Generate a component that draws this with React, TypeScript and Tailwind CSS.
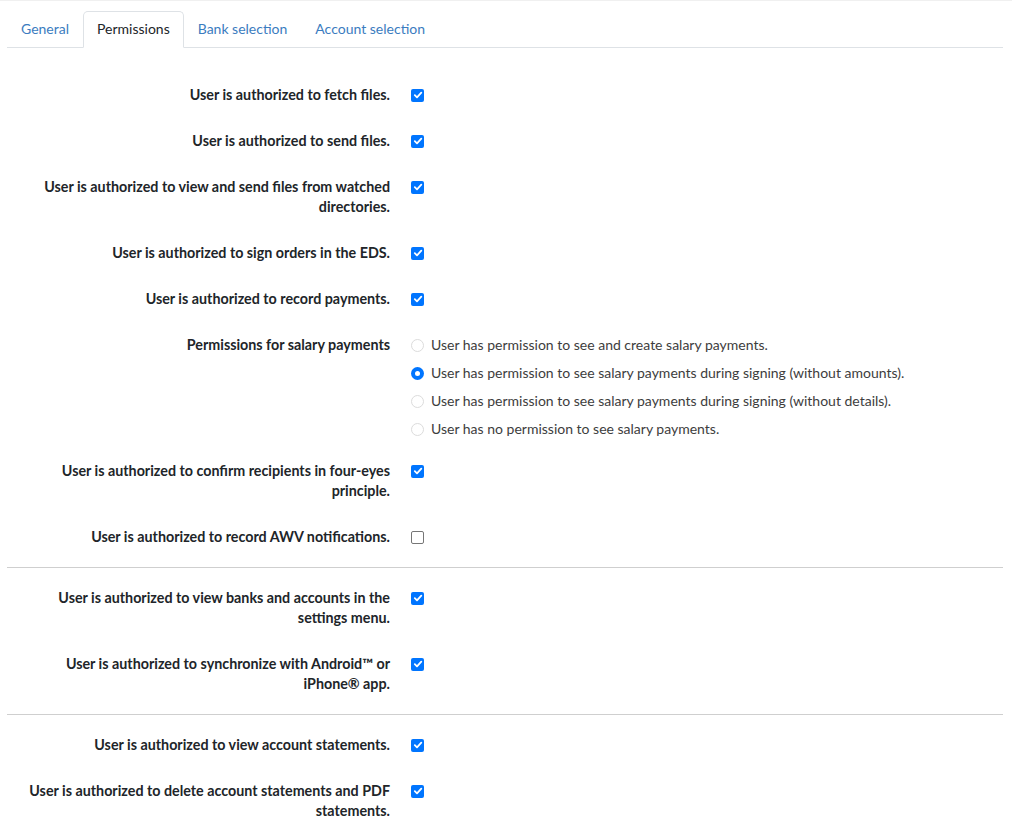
import { Fragment } from 'react';

type Row =
  | { kind: 'check'; lines: string[]; checked: boolean }
  | { kind: 'radio'; lines: string[]; options: string[]; selected: number };

const sections: Row[][] = [
  [
    { kind: 'check', lines: ['User is authorized to fetch files.'], checked: true },
    { kind: 'check', lines: ['User is authorized to send files.'], checked: true },
    { kind: 'check', lines: ['User is authorized to view and send files from watched', 'directories.'], checked: true },
    { kind: 'check', lines: ['User is authorized to sign orders in the EDS.'], checked: true },
    { kind: 'check', lines: ['User is authorized to record payments.'], checked: true },
    {
      kind: 'radio',
      lines: ['Permissions for salary payments'],
      options: [
        'User has permission to see and create salary payments.',
        'User has permission to see salary payments during signing (without amounts).',
        'User has permission to see salary payments during signing (without details).',
        'User has no permission to see salary payments.',
      ],
      selected: 1,
    },
    { kind: 'check', lines: ['User is authorized to confirm recipients in four-eyes', 'principle.'], checked: true },
    { kind: 'check', lines: ['User is authorized to record AWV notifications.'], checked: false },
  ],
  [
    { kind: 'check', lines: ['User is authorized to view banks and accounts in the', 'settings menu.'], checked: true },
    { kind: 'check', lines: ['User is authorized to synchronize with Android\u2122 or', 'iPhone\u00ae app.'], checked: true },
  ],
  [
    { kind: 'check', lines: ['User is authorized to view account statements.'], checked: true },
    { kind: 'check', lines: ['User is authorized to delete account statements and PDF', 'statements.'], checked: true },
  ],
];

const tabs = ['General', 'Permissions', 'Bank selection', 'Account selection'];

function Checkbox({ checked }: { checked: boolean }) {
  if (!checked) {
    return <span className="block w-[13px] h-[13px] rounded-[2px] border border-[#767676] bg-white" />;
  }
  return (
    <span className="flex items-center justify-center w-[13px] h-[13px] rounded-[2px] bg-[#0075ff]">
      <svg width="10" height="10" viewBox="0 0 10 10" fill="none">
        <path d="M1.8 5.2 L4 7.3 L8.3 2.6" stroke="white" strokeWidth="1.8" strokeLinecap="round" strokeLinejoin="round" />
      </svg>
    </span>
  );
}

function Radio({ checked }: { checked: boolean }) {
  if (checked) {
    return (
      <span className="flex items-center justify-center w-[13px] h-[13px] rounded-full bg-[#0075ff]">
        <span className="block w-[5px] h-[5px] rounded-full bg-white" />
      </span>
    );
  }
  return <span className="block w-[13px] h-[13px] rounded-full border border-[#dcdcdc] bg-white" />;
}

export default function App() {
  return (
    <div
      className="min-h-screen bg-white border-t border-[#f0f0f0] pl-[7px] pr-[9px] text-[14px] leading-5 text-[#212529]"
      style={{ fontFamily: 'Lato, "Noto Sans", sans-serif' }}
    >
      <div className="flex pt-[10px] border-b border-[#dee2e6]">
        {tabs.map((t, i) => (
          <div
            key={t}
            className={
              i === 1
                ? 'px-[13px] py-[7px] -mb-px border border-[#dee2e6] border-b-white rounded-t-[5px] bg-white text-[#212529]'
                : 'px-[13px] py-[7px] border border-transparent text-[#3b7cc0]'
            }
          >
            {t}
          </div>
        ))}
      </div>

      <div className="pt-[37px]">
        {sections.map((rows, si) => (
          <Fragment key={si}>
            {si > 0 && <hr className="my-5 border-[#cfcfcf]" />}
            <div className="flex flex-col gap-[26px]">
              {rows.map((row, ri) => (
                <div key={ri} className={`flex ${row.kind === 'radio' ? '-mb-[4px]' : ''}`}>
                  <div className="w-[383px] shrink-0 text-right font-bold text-[14.3px]">
                    {row.lines.map((l) => (
                      <div key={l} className="whitespace-nowrap">{l}</div>
                    ))}
                  </div>
                  {row.kind === 'check' ? (
                    <div className="pl-[21px] h-5 flex items-center">
                      <Checkbox checked={row.checked} />
                    </div>
                  ) : (
                    <div className="pl-[21px] flex flex-col gap-2">
                      {row.options.map((o, oi) => (
                        <div key={o} className="flex items-center gap-[7px] h-5 text-[#3d3d3d]">
                          <Radio checked={oi === row.selected} />
                          <span>{o}</span>
                        </div>
                      ))}
                    </div>
                  )}
                </div>
              ))}
            </div>
          </Fragment>
        ))}
      </div>
    </div>
  );
}
